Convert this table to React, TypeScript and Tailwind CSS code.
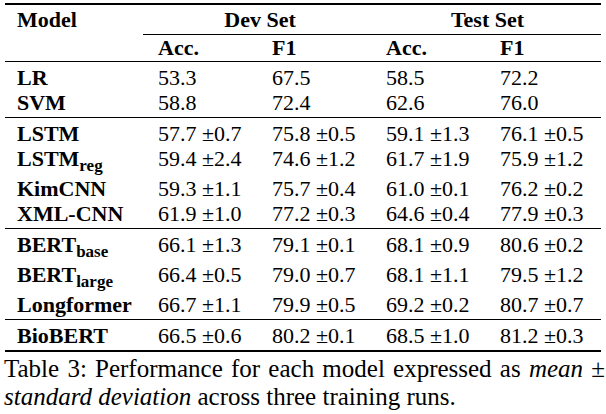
type Row = { name: React.ReactNode; cells: string[]; tall?: boolean };

const Sub = ({ children }: { children: string }) => (
  <sub className="text-[17px] relative top-[5px]">{children}</sub>
);

const GROUPS: Row[][] = [
  [
    { name: "LR", cells: ["53.3", "67.5", "58.5", "72.2"] },
    { name: "SVM", cells: ["58.8", "72.4", "62.6", "76.0"] },
  ],
  [
    { name: "LSTM", cells: ["57.7 ±0.7", "75.8 ±0.5", "59.1 ±1.3", "76.1 ±0.5"] },
    {
      name: (
        <>
          LSTM<Sub>reg</Sub>
        </>
      ),
      cells: ["59.4 ±2.4", "74.6 ±1.2", "61.7 ±1.9", "75.9 ±1.2"],
      tall: true,
    },
    { name: "KimCNN", cells: ["59.3 ±1.1", "75.7 ±0.4", "61.0 ±0.1", "76.2 ±0.2"] },
    { name: "XML-CNN", cells: ["61.9 ±1.0", "77.2 ±0.3", "64.6 ±0.4", "77.9 ±0.3"] },
  ],
  [
    {
      name: (
        <>
          BERT<Sub>base</Sub>
        </>
      ),
      cells: ["66.1 ±1.3", "79.1 ±0.1", "68.1 ±0.9", "80.6 ±0.2"],
      tall: true,
    },
    {
      name: (
        <>
          BERT<Sub>large</Sub>
        </>
      ),
      cells: ["66.4 ±0.5", "79.0 ±0.7", "68.1 ±1.1", "79.5 ±1.2"],
      tall: true,
    },
    { name: "Longformer", cells: ["66.7 ±1.1", "79.9 ±0.5", "69.2 ±0.2", "80.7 ±0.7"] },
  ],
  [{ name: "BioBERT", cells: ["66.5 ±0.6", "80.2 ±0.1", "68.5 ±1.0", "81.2 ±0.3"] }],
];

const COLS = "grid grid-cols-[141px_114px_114px_114px_113px]";
const HEAD = "h-[26px] leading-[26px] text-[22px] font-bold";

export default function App() {
  return (
    <div className="w-[606px] h-[414px] bg-white text-black font-['Liberation_Serif',serif] pt-[3px] overflow-hidden">
      <div className="ml-[5px] w-[596px]">
        {/* header */}
        <div className="border-t-2 border-black pt-[2px]">
          <div className={`${COLS} ${HEAD}`}>
            <div className="pl-[12px]">Model</div>
            <div className="col-span-2 text-center">Dev Set</div>
            <div className="col-span-2 text-center">Test Set</div>
          </div>
          <div className="ml-[138px] border-t border-black mt-[1px]" />
          <div className={`${COLS} ${HEAD}`}>
            <div />
            <div className="pl-[12px]">Acc.</div>
            <div className="pl-[12px]">F1</div>
            <div className="pl-[12px]">Acc.</div>
            <div className="pl-[12px]">F1</div>
          </div>
        </div>

        {GROUPS.map((rows, gi) => (
          <div
            key={gi}
            className={`border-t border-black pt-[3px] pb-[2px] ${
              gi === GROUPS.length - 1 ? "border-b-2" : ""
            }`}
          >
            {rows.map((r, ri) => (
              <div
                key={ri}
                className={`${COLS} leading-[25px] text-[22px] ${
                  r.tall ? "h-[30px]" : "h-[25px]"
                }`}
              >
                <div className="pl-[12px] font-bold whitespace-nowrap">{r.name}</div>
                {r.cells.map((c, ci) => (
                  <div key={ci} className="pl-[12px] whitespace-nowrap">
                    {c}
                  </div>
                ))}
              </div>
            ))}
          </div>
        ))}
      </div>

      {/* caption */}
      <p className="mt-[3px] ml-[4px] w-[601px] text-[25px] leading-[28px] text-justify">
        Table 3: Performance for each model expressed as <i>mean</i> ±{" "}
        <i>standard deviation</i> across three training runs.
      </p>
    </div>
  );
}
